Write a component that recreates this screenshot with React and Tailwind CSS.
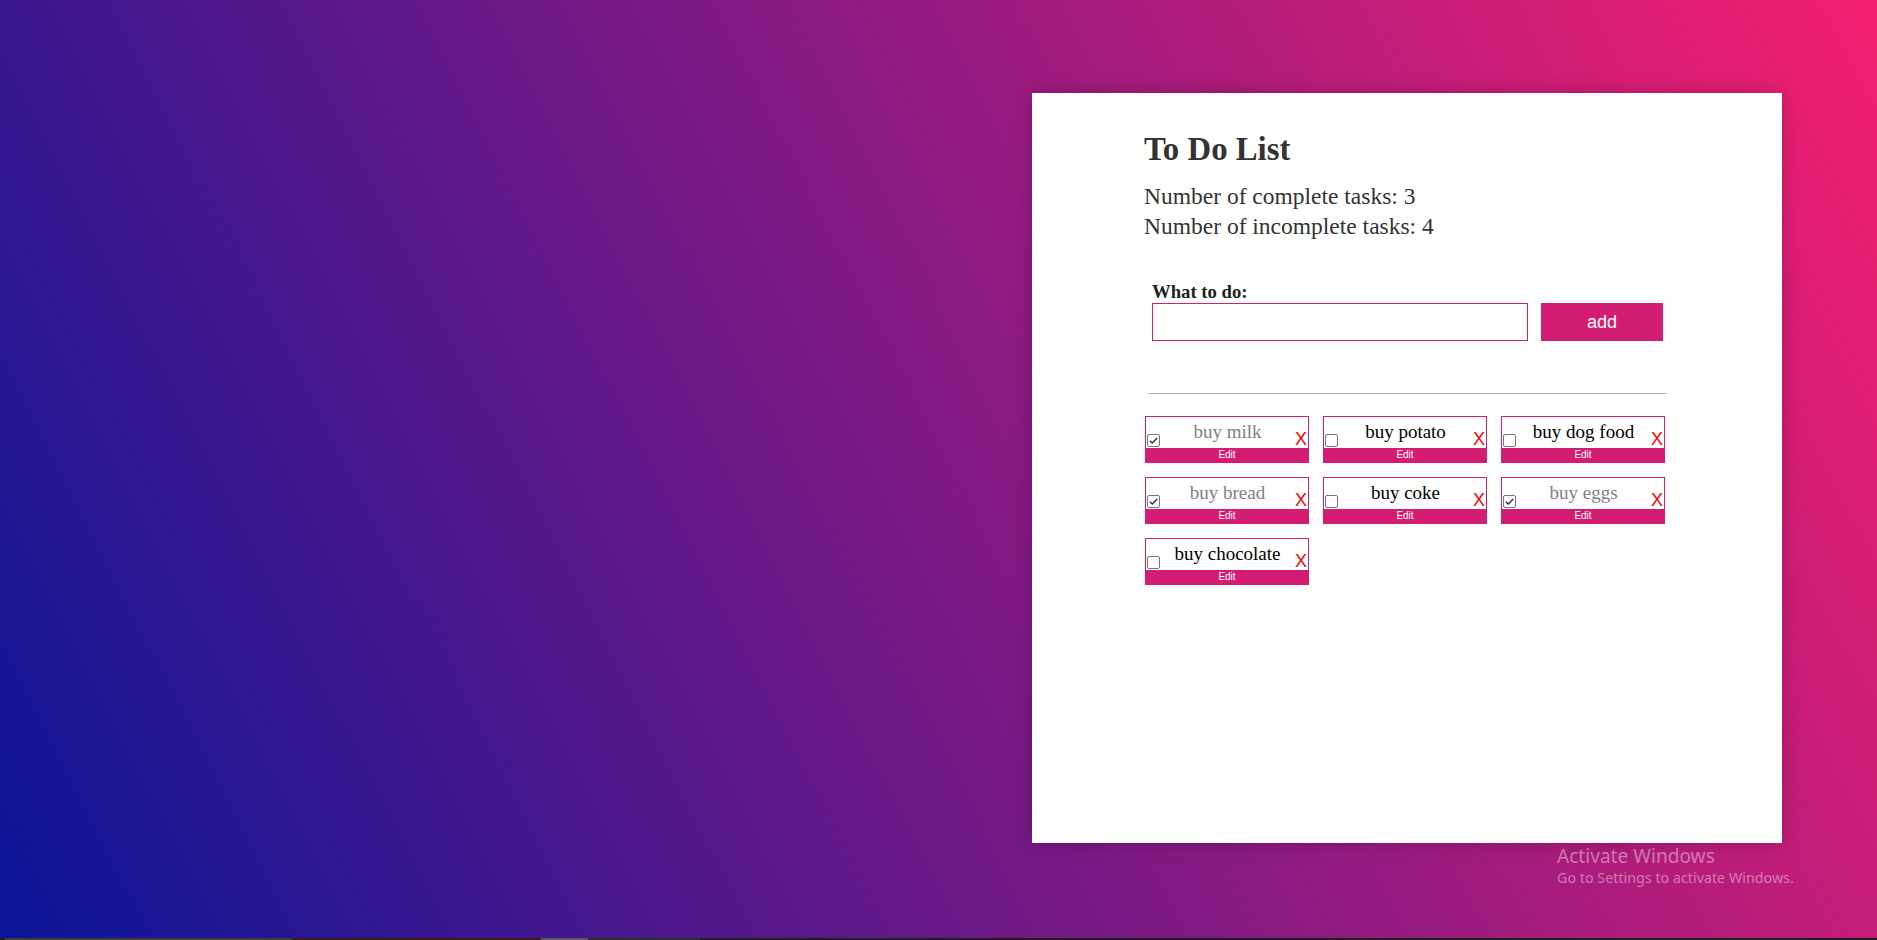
import React from 'react'

const tasks = [
  { id: 1, text: 'buy milk', done: true },
  { id: 2, text: 'buy potato', done: false },
  { id: 3, text: 'buy dog food', done: false },
  { id: 4, text: 'buy bread', done: true },
  { id: 5, text: 'buy coke', done: false },
  { id: 6, text: 'buy eggs', done: true },
  { id: 7, text: 'buy chocolate', done: false },
]

function Checkbox({ checked }) {
  return (
    <span className="mb-[1px] ml-[1px] flex h-[13px] w-[13px] shrink-0 items-center justify-center rounded-[2px] border border-[#767676] bg-white">
      {checked && (
        <svg viewBox="0 0 12 12" className="h-[11px] w-[11px]" fill="none" stroke="#333" strokeWidth="1.6">
          <path d="M2 6.2 4.7 8.8 10 3.2" />
        </svg>
      )}
    </span>
  )
}

function TaskCard({ task }) {
  return (
    <div className="flex h-[47px] flex-col border border-[#d31d73] bg-white">
      <div className="flex h-[31px] items-end">
        <Checkbox checked={task.done} />
        <span
          className={
            'flex-1 self-start pt-[4px] text-center text-[19px] leading-[22px] ' +
            (task.done ? 'text-[#808080]' : 'text-black')
          }
        >
          {task.text}
        </span>
        <span className="w-[13px] shrink-0 self-end font-['Liberation_Sans',Arial,sans-serif] text-[18px] leading-[18px] text-[#ff0000]">
          X
        </span>
      </div>
      <button className="h-[14px] w-full bg-[#d31d73] font-['Liberation_Sans',Arial,sans-serif] text-[10px] leading-[14px] text-white">
        Edit
      </button>
    </div>
  )
}

export default function App() {
  const complete = tasks.filter((t) => t.done).length
  const incomplete = tasks.length - complete

  return (
    <div className="flex h-[940px] w-full flex-col overflow-hidden bg-[linear-gradient(63deg,#0a1597_0%,#f41f70_100%)]">
      <div className="pl-[1032px] pt-[93px]">
        <div className="h-[750px] w-[750px] bg-white pl-[112px] pt-[38px] font-['Liberation_Serif','Times_New_Roman',serif] shadow-[0_0_18px_rgba(0,0,0,0.22)]">
          <h1 className="text-[32.8px] font-bold leading-[36px] text-[#333]">To Do List</h1>
          <div className="mt-[14px] text-[23.5px] leading-[30px] text-[#333]">
            <p>Number of complete tasks: {complete}</p>
            <p>Number of incomplete tasks: {incomplete}</p>
          </div>

          <div className="mt-[40px] pl-[8px]">
            <label className="block text-[18.72px] font-bold leading-[22px] text-[#222]">What to do:</label>
            <div className="flex gap-[13px]">
              <input className="h-[38px] w-[376px] border border-[#d31d73] bg-white outline-none" />
              <button className="h-[38px] w-[122px] bg-[#d31d73] font-['Liberation_Sans',Arial,sans-serif] text-[18px] text-white">
                add
              </button>
            </div>
          </div>

          <div className="ml-[5px] mt-[52px] w-[517px] border-t border-[#a9a9a9]" />

          <div className="ml-[1px] mt-[22px] grid w-[520px] grid-cols-3 gap-[14px]">
            {tasks.map((t) => (
              <TaskCard key={t.id} task={t} />
            ))}
          </div>
        </div>
      </div>

      <div className="pl-[1557px] pt-[1px] font-['Noto_Sans','Open_Sans',sans-serif] text-[rgba(255,255,255,0.42)]">
        <p className="text-[19.1px] leading-[24px]">Activate Windows</p>
        <p className="text-[14.3px] leading-[20px]">Go to Settings to activate Windows.</p>
      </div>

      <div className="flex-1" />

      <div className="flex h-[2px] bg-[#1f1f1f]">
        <div className="ml-[5px] w-[287px] bg-[#3f3f3f]" />
        <div className="w-[249px] bg-[#3a1c1e]" />
        <div className="w-[47px] bg-[#5b5b5b]" />
        <div className="w-[112px] bg-[#263226]" />
      </div>
    </div>
  )
}
